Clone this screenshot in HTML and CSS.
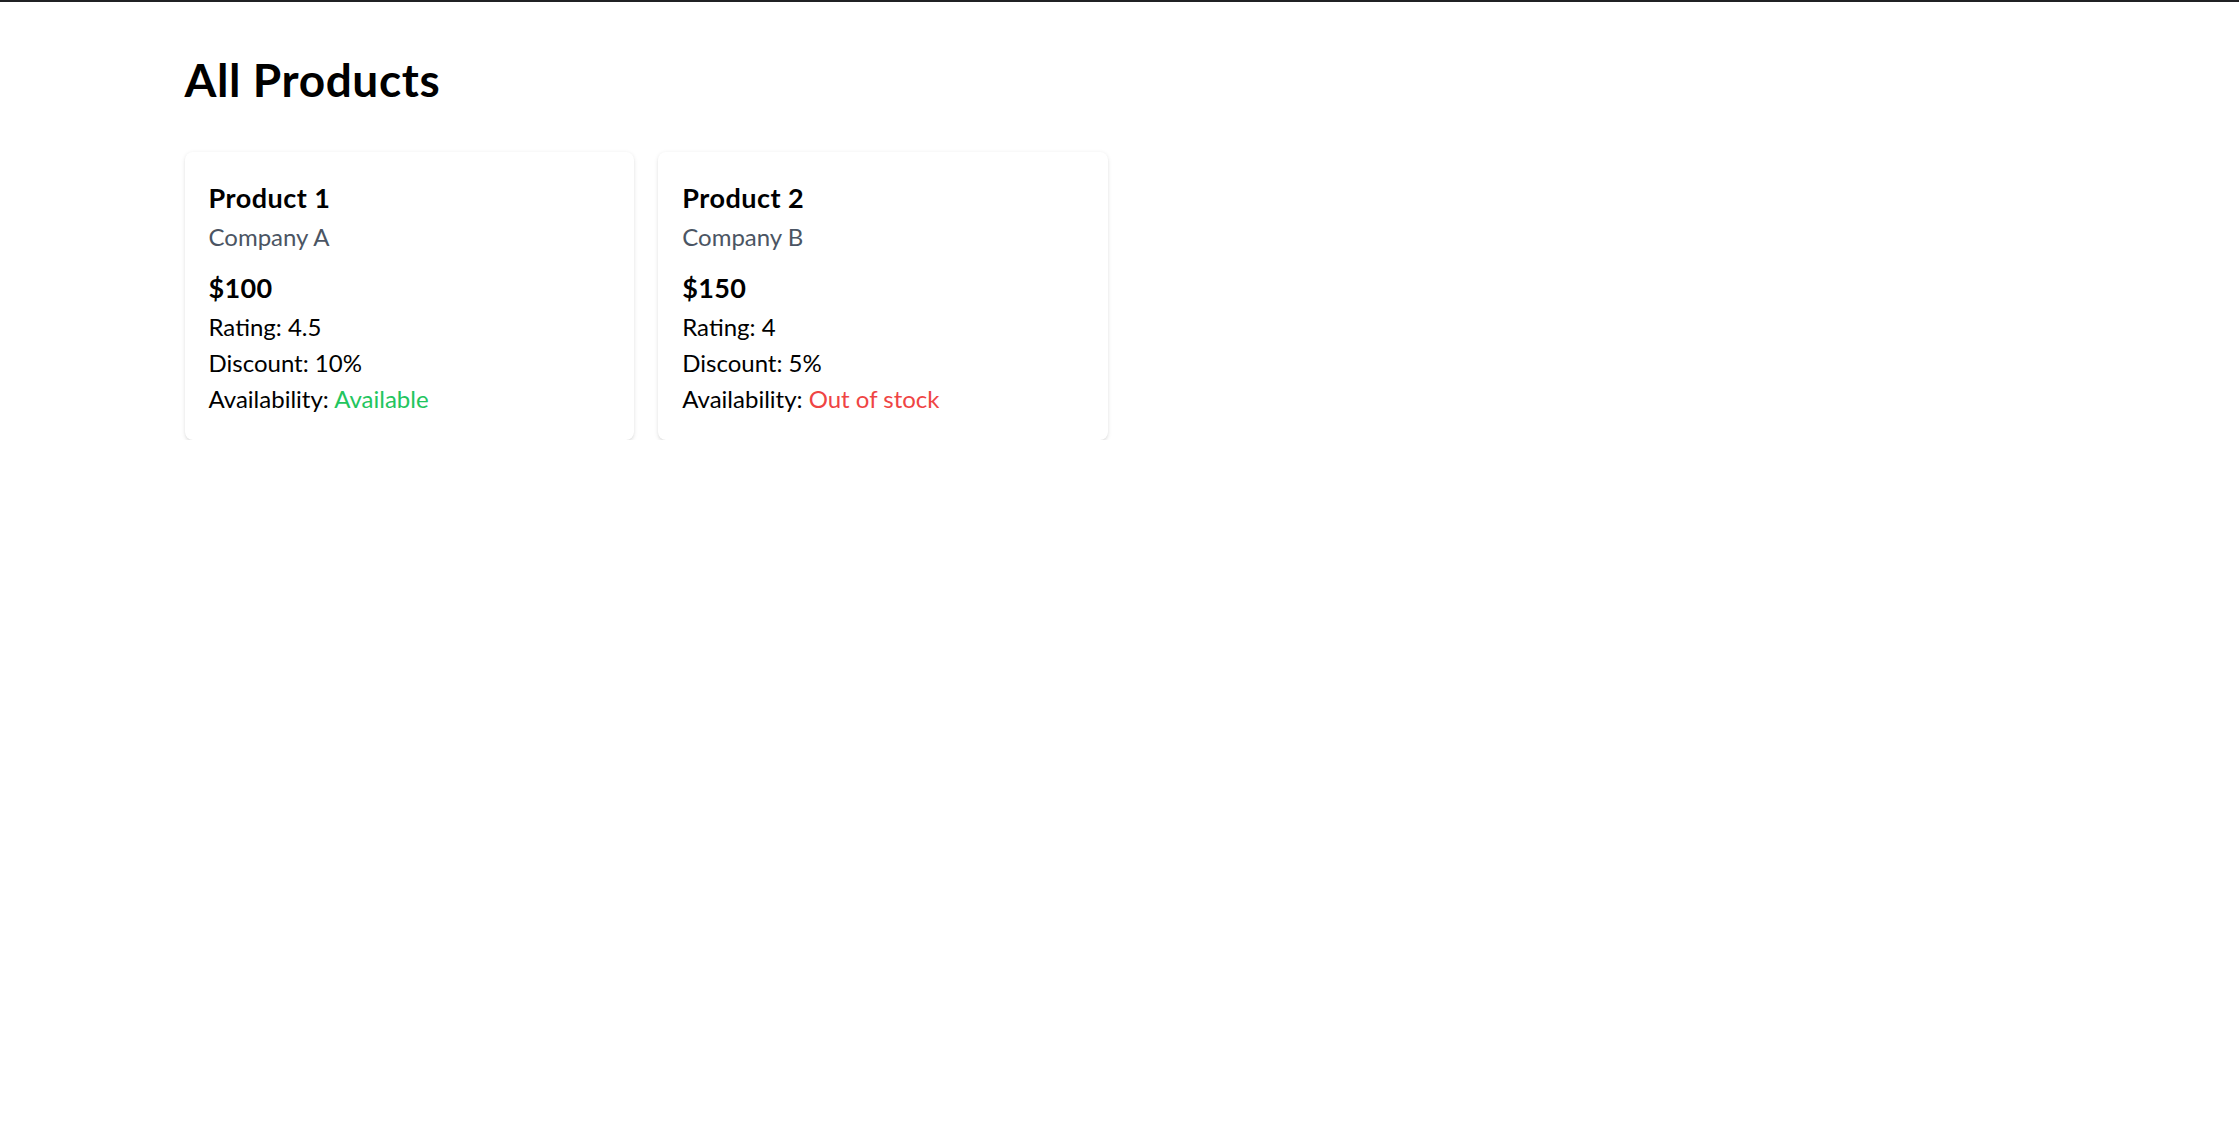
FILE: index.html
```html
<!DOCTYPE html>
<html lang="en">
<head>
<meta charset="utf-8">
<title>All Products</title>
<link rel="stylesheet" href="styles.css">
</head>
<body>
<div class="topbar"></div>
<main class="container">
  <h1 class="page-title">All Products</h1>
  <div class="product-grid">
    <div class="card">
      <h2 class="card-title">Product 1</h2>
      <p class="company">Company A</p>
      <p class="price">$100</p>
      <p class="meta">Rating: 4.5</p>
      <p class="meta">Discount: 10%</p>
      <p class="meta">Availability: <span class="available">Available</span></p>
    </div>
    <div class="card">
      <h2 class="card-title">Product 2</h2>
      <p class="company">Company B</p>
      <p class="price">$150</p>
      <p class="meta">Rating: 4</p>
      <p class="meta">Discount: 5%</p>
      <p class="meta">Availability: <span class="out">Out of stock</span></p>
    </div>
  </div>
</main>
</body>
</html>
```
FILE: styles.css
```css
*, *::before, *::after { box-sizing: border-box; }
html, body { margin: 0; padding: 0; background: #ffffff; }
body {
  font-family: Lato, "Liberation Sans", sans-serif;
  color: #000000;
}
.topbar {
  height: 2px;
  background: #202124;
}
.container {
  max-width: 1920px;
  margin: 0 auto;
  padding: 51px 24px 0 25px;
}
.page-title {
  margin: 0 0 45px;
  font-size: 46px;
  line-height: 54px;
  font-weight: 700;
  letter-spacing: 0.6px;
}
.product-grid {
  display: grid;
  grid-template-columns: repeat(4, 1fr);
  gap: 24px;
}
.card {
  background: #ffffff;
  border-radius: 8px;
  padding: 25px 24px 23px;
  box-shadow: 0 1.5px 4.5px 0 rgba(0,0,0,0.1), 0 1.5px 3px -1.5px rgba(0,0,0,0.1);
}
.card p, .card h2 { margin: 0; }
.card-title {
  font-size: 27px;
  line-height: 42px;
  font-weight: 700;
  letter-spacing: 0.5px;
}
.company {
  font-size: 24px;
  line-height: 36px;
  color: #4b5563;
}
.price {
  margin-top: 12px !important;
  font-size: 27px;
  line-height: 42px;
  font-weight: 700;
  letter-spacing: 0.3px;
}
.meta {
  font-size: 24px;
  line-height: 36px;
}
.available { color: #22c55e; }
.out { color: #ef4444; }
```
